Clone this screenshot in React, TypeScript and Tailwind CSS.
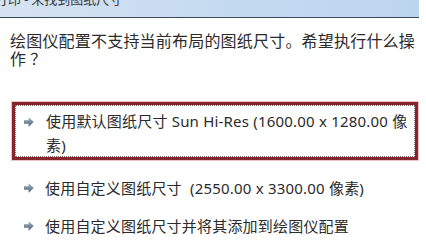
import React from 'react';

const font = {
  fontFamily: '"Noto Sans", "Noto Sans CJK SC", sans-serif',
};

const cjk = {
  fontFamily: '"Noto Sans CJK SC", "Noto Sans", sans-serif',
};

const Arrow: React.FC = () => (
  <svg width="10" height="10" viewBox="0 0 10 10" className="shrink-0">
    <defs>
      <linearGradient id="arr" x1="0" y1="0" x2="0" y2="1">
        <stop offset="0" stopColor="#a3b6c9" />
        <stop offset="1" stopColor="#4a5e74" />
      </linearGradient>
    </defs>
    <path d="M0 3.2 H4.6 V0.3 L9.8 5 L4.6 9.7 V6.8 H0 Z" fill="url(#arr)" />
  </svg>
);

const options = [
  '使用自定义图纸尺寸  (2550.00 x 3300.00 像素)',
  '使用自定义图纸尺寸并将其添加到绘图仪配置',
];

const App: React.FC = () => {
  return (
    <div className="w-[426px] h-[244px] bg-white overflow-hidden text-[#2b2b2b]" style={font}>
      <div className="h-[18px] w-[419px] overflow-hidden border-b border-[#3f4a58] bg-gradient-to-r from-[#d6e3f1] via-[#c6dbf1] to-[#bcd5ef]">
        <div className="-mt-[10px] -ml-[5px] text-[13px] leading-[17px] text-[#3a3a3a] whitespace-nowrap" style={cjk}>
          打印 - 未找到图纸尺寸
        </div>
      </div>

      <p className="mt-[13px] pl-[10px] pr-[10px] text-[16px] leading-[18px] tracking-[0.2px]" style={cjk}>
        绘图仪配置不支持当前布局的图纸尺寸。希望执行什么操作<span className="ml-[4px]">？</span>
      </p>

      <div className="mt-[35px] ml-[12px] w-[406px] h-[58px] border-[3px] border-[#86262c] shadow-[0_0_0_1px_#efc4c4]">
        <div className="h-full border border-dotted border-[#7a6a6a] flex pl-[8px] pt-[3px]">
          <div className="pt-[8px] pr-[12px]">
            <Arrow />
          </div>
          <div className="text-[15px] leading-[24px] whitespace-nowrap tracking-[0.2px]">
            使用默认图纸尺寸 Sun Hi-Res (1600.00 x 1280.00 像
            <br />
            素)
          </div>
        </div>
      </div>

      <div className="mt-[16px] flex flex-col gap-[14px]">
        {options.map((text) => (
          <div key={text} className="flex items-center pl-[24px] h-[24px]">
            <div className="pr-[11px]">
              <Arrow />
            </div>
            <span className="text-[15px] leading-[24px] whitespace-pre tracking-[0.2px]">{text}</span>
          </div>
        ))}
      </div>
    </div>
  );
};

export default App;
